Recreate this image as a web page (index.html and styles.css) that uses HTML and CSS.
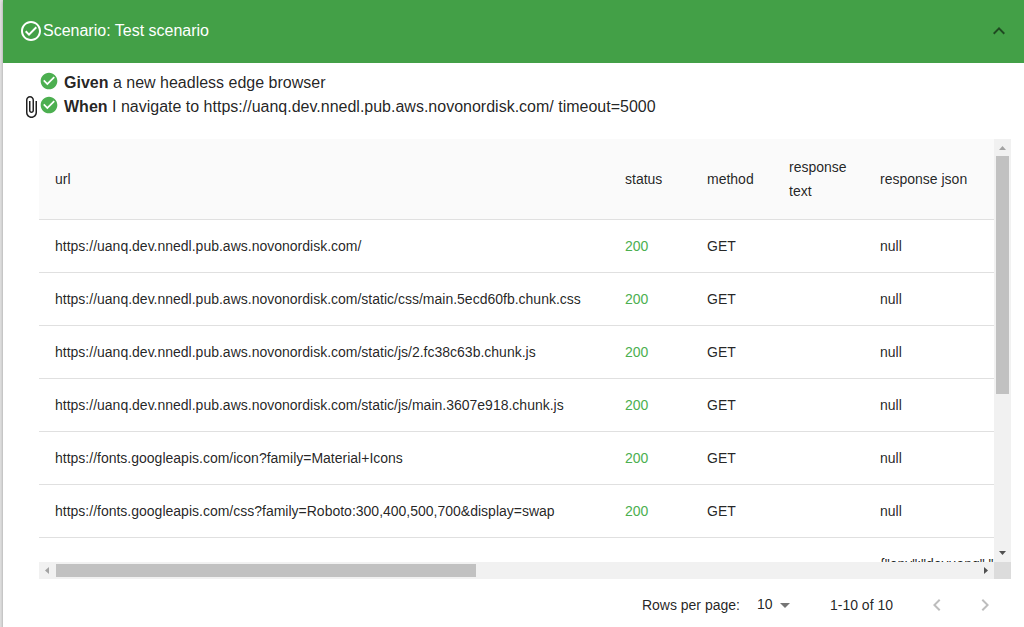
FILE: index.html
```html
<!DOCTYPE html>
<html lang="en">
<head>
<meta charset="utf-8">
<title>Test scenario</title>
<link rel="stylesheet" href="styles.css">
</head>
<body>
<main class="panel">
  <button class="summary" type="button" aria-expanded="true">
    <svg class="icon" viewBox="0 0 24 24" aria-hidden="true"><path d="M12 2C6.500 2 2 6.500 2 12s4.500 10 10 10 10-4.500 10-10S17.500 2 12 2zm0 18c-4.400 0-8-3.600-8-8s3.600-8 8-8 8 3.600 8 8-3.600 8-8 8zm4.600-12.400L10 14.200l-2.600-2.600L6 13l4 4 8-8z"/></svg>
    <span class="title">Scenario: Test scenario</span>
    <svg class="icon chevron" viewBox="0 0 24 24" aria-hidden="true"><path d="M12 8l-6 6 1.410 1.410L12 10.830l4.590 4.580L18 14z"/></svg>
  </button>

  <ul class="steps">
    <li class="step">
      <span class="attachment"></span>
      <svg class="check" viewBox="0 0 24 24" aria-hidden="true"><path d="M12 2C6.480 2 2 6.480 2 12s4.480 10 10 10 10-4.480 10-10S17.520 2 12 2zm-2 15l-5-5 1.410-1.410L10 14.170l7.590-7.590L19 8l-9 9z"/></svg>
      <span class="step-text"><b>Given</b> a new headless edge browser</span>
    </li>
    <li class="step">
      <span class="attachment"><svg class="icon" viewBox="0 0 24 24" aria-hidden="true"><path d="M16.500 6v11.500c0 2.210-1.790 4-4 4s-4-1.790-4-4V5c0-1.380 1.120-2.500 2.500-2.500s2.500 1.120 2.500 2.500v10.500c0 .55-.45 1-1 1s-1-.45-1-1V6H10v9.500c0 1.380 1.120 2.500 2.500 2.500s2.500-1.120 2.500-2.500V5c0-2.210-1.790-4-4-4S7 2.790 7 5v12.500c0 3.040 2.460 5.500 5.500 5.500s5.500-2.460 5.500-5.500V6h-1.500z"/></svg></span>
      <svg class="check" viewBox="0 0 24 24" aria-hidden="true"><path d="M12 2C6.480 2 2 6.480 2 12s4.480 10 10 10 10-4.480 10-10S17.520 2 12 2zm-2 15l-5-5 1.410-1.410L10 14.170l7.590-7.590L19 8l-9 9z"/></svg>
      <span class="step-text"><b>When</b> I navigate to https://uanq.dev.nnedl.pub.aws.novonordisk.com/ timeout=5000</span>
    </li>
  </ul>

  <section class="requests">
    <div class="viewport">
      <table class="table">
        <colgroup><col class="col-url"><col class="col-short"><col class="col-short"><col class="col-text"><col class="col-json"></colgroup>
        <thead>
          <tr><th>url</th><th>status</th><th>method</th><th>response text</th><th>response json</th></tr>
        </thead>
        <tbody>
          <tr><td>https://uanq.dev.nnedl.pub.aws.novonordisk.com/</td><td class="ok">200</td><td>GET</td><td></td><td>null</td></tr>
          <tr><td>https://uanq.dev.nnedl.pub.aws.novonordisk.com/static/css/main.5ecd60fb.chunk.css</td><td class="ok">200</td><td>GET</td><td></td><td>null</td></tr>
          <tr><td>https://uanq.dev.nnedl.pub.aws.novonordisk.com/static/js/2.fc38c63b.chunk.js</td><td class="ok">200</td><td>GET</td><td></td><td>null</td></tr>
          <tr><td>https://uanq.dev.nnedl.pub.aws.novonordisk.com/static/js/main.3607e918.chunk.js</td><td class="ok">200</td><td>GET</td><td></td><td>null</td></tr>
          <tr><td>https://fonts.googleapis.com/icon?family=Material+Icons</td><td class="ok">200</td><td>GET</td><td></td><td>null</td></tr>
          <tr><td>https://fonts.googleapis.com/css?family=Roboto:300,400,500,700&amp;display=swap</td><td class="ok">200</td><td>GET</td><td></td><td>null</td></tr>
          <tr><td></td><td></td><td></td><td></td><td>{"env":"devuanq","</td></tr>
        </tbody>
      </table>
    </div>
    <div class="bar bar-y">
      <svg class="arrow dim" viewBox="0 0 17 17" aria-hidden="true"><path d="M5 11h7L8.500 7z"/></svg>
      <span class="track"><span class="thumb"></span></span>
      <svg class="arrow" viewBox="0 0 17 17" aria-hidden="true"><path d="M5 6h7l-3.500 4z"/></svg>
    </div>
    <div class="bar bar-x">
      <svg class="arrow dim" viewBox="0 0 17 17" aria-hidden="true"><path d="M10 5v7L6 8.500z"/></svg>
      <span class="track"><span class="thumb"></span></span>
      <svg class="arrow" viewBox="0 0 17 17" aria-hidden="true"><path d="M7 5v7l4-3.500z"/></svg>
    </div>
    <div class="corner"></div>
  </section>

  <footer class="pagination">
    <label for="rows">Rows per page:</label>
    <span class="select-wrap">
      <select id="rows" class="select"><option>10</option></select>
      <svg class="icon caret" viewBox="0 0 24 24" aria-hidden="true"><path d="M7 10l5 5 5-5z"/></svg>
    </span>
    <span class="range">1-10 of 10</span>
    <button class="page-btn" type="button" aria-label="Previous page" disabled><svg class="icon" viewBox="0 0 24 24" aria-hidden="true"><path d="M15.410 7.410L14 6l-6 6 6 6 1.410-1.410L10.830 12z"/></svg></button>
    <button class="page-btn" type="button" aria-label="Next page" disabled><svg class="icon" viewBox="0 0 24 24" aria-hidden="true"><path d="M10 6L8.590 7.410 13.170 12l-4.580 4.590L10 18l6-6z"/></svg></button>
  </footer>
</main>
</body>
</html>
```
FILE: styles.css
```css
* {
  box-sizing: border-box;
}

html {
  overflow: hidden;
}

body {
  margin: 0;
  padding-left: 3px;
  background: #e0e0e0;
  color: rgba(0, 0, 0, 0.87);
  font: 14px/20px "Liberation Sans", Arial, sans-serif;
}

.panel {
  min-height: 100vh;
  background: #fff;
  box-shadow: 0 1px 3px rgba(0, 0, 0, 0.3);
}

.icon {
  flex: none;
  display: block;
  width: 24px;
  height: 24px;
  fill: currentColor;
}

.summary {
  display: flex;
  align-items: center;
  width: 100%;
  height: 63px;
  padding: 0 13px 2px 16px;
  border: 0;
  background: #43a047;
  color: #fff;
  font: 16px/24px "Liberation Sans", Arial, sans-serif;
  text-align: left;
}

.title {
  flex: 1;
}

.chevron {
  color: rgba(0, 0, 0, 0.54);
}

.steps {
  margin: 0;
  padding: 8px 16px 0;
  list-style: none;
  font-size: 16px;
  line-height: 24px;
}

.step {
  display: flex;
  height: 24px;
}

.attachment {
  width: 20px;
}

.check {
  flex: none;
  width: 20px;
  height: 20px;
  margin-right: 5px;
  fill: #4caf50;
}

.requests {
  display: grid;
  grid-template: 423px 17px / minmax(0, 1fr) 17px;
  margin: 20px 13px 0 36px;
}

.viewport {
  overflow: hidden;
}

.table {
  width: 2090px;
  border-collapse: separate;
  border-spacing: 0;
  table-layout: fixed;
}

.col-url {
  width: 570px;
}

.col-short {
  width: 82px;
}

.col-text {
  width: 91px;
}

.table th,
.table td {
  height: 53px;
  padding: 16px;
  border-bottom: 1px solid #e0e0e0;
  font-weight: 400;
  text-align: left;
  white-space: nowrap;
}

.table th {
  background: #fafafa;
  line-height: 24px;
  white-space: normal;
}

.table .ok {
  color: #4caf50;
}

.bar {
  display: flex;
  background: #f1f1f1;
}

.bar-y {
  flex-direction: column;
}

.track {
  display: flex;
  flex: 1;
}

.bar-y .track {
  padding: 0 2px;
}

.bar-x .track {
  padding: 2px 0;
}

.thumb {
  background: #c1c1c1;
}

.bar-y .thumb {
  width: 100%;
  height: 61.2%;
}

.bar-x .thumb {
  width: 45.6%;
}

.arrow {
  flex: none;
  width: 17px;
  height: 17px;
  fill: #505050;
}

.dim {
  fill: #a3a3a3;
}

.corner {
  background: #dcdcdc;
}

.pagination {
  display: flex;
  align-items: center;
  justify-content: flex-end;
  height: 52px;
  padding-right: 15px;
}

.select-wrap {
  display: grid;
  align-items: center;
  margin: 0 33px 0 9px;
}

.select {
  grid-area: 1 / 1;
  appearance: none;
  width: 48px;
  height: 24px;
  padding: 0 24px 2px 8px;
  border: 0;
  background: transparent;
  color: inherit;
  font: inherit;
}

.caret {
  grid-area: 1 / 1;
  justify-self: end;
  color: rgba(0, 0, 0, 0.54);
  pointer-events: none;
}

.range {
  margin-right: 20px;
}

.page-btn {
  padding: 12px;
  border: 0;
  background: transparent;
  color: rgba(0, 0, 0, 0.26);
}
```
